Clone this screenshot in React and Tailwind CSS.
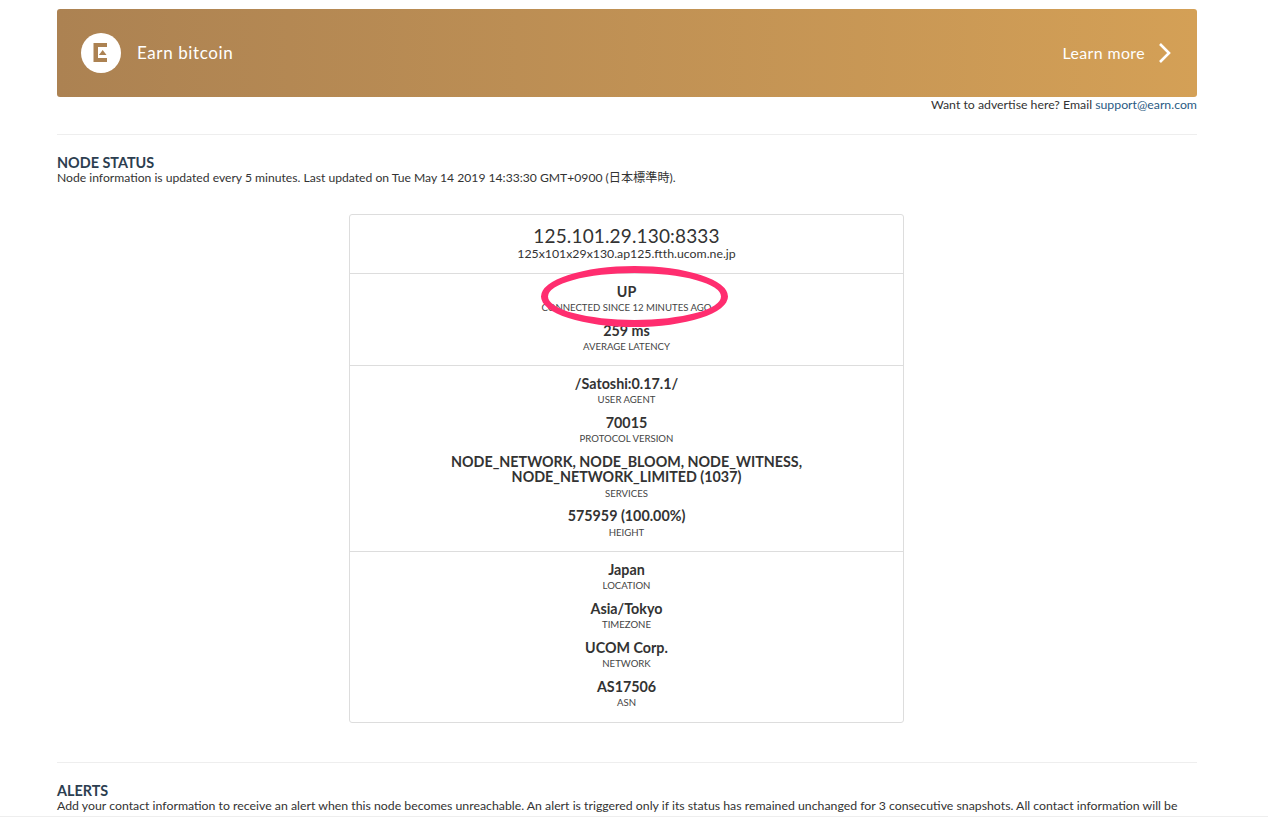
const sans = { fontFamily: '"Lato", "Noto Sans CJK JP", sans-serif' };

function Item({ value, label }) {
  return (
    <div className="mb-[5.5px]">
      <div className="text-[14.3px] leading-[15.5px] font-bold text-[#333]">{value}</div>
      <div className="text-[9.6px] leading-[18px] text-[#444] uppercase">{label}</div>
    </div>
  );
}

function Logo() {
  return (
    <svg width="40" height="40" viewBox="0 0 40 40">
      <circle cx="20" cy="20" r="20" fill="#fff" />
      <path d="M12.5 10H26v4h-9v11h9v4H12.5z" fill="#ac8252" />
      <path d="M21.7 17l3.8 5h-7.6z" fill="#ac8252" />
    </svg>
  );
}

export default function App() {
  return (
    <div className="h-[817px] overflow-hidden bg-white border-b border-[#eee]" style={sans}>
      <div className="w-[1140px] ml-[57px] pt-[9px]">
        <div className="h-[88px] rounded-[3px] bg-gradient-to-r from-[#ac8252] to-[#d4a056] flex items-center justify-between pl-6 pr-6 text-white">
          <div className="flex items-center gap-4">
            <Logo />
            <span className="text-[17px] tracking-[0.6px]">Earn bitcoin</span>
          </div>
          <div className="flex items-center gap-[12px]">
            <span className="text-[15.9px] tracking-[0.4px]">Learn more</span>
            <svg width="16" height="22" viewBox="0 0 16 22" fill="none" stroke="#fff" strokeWidth="2.6">
              <path d="M3 2l9 9-9 9" />
            </svg>
          </div>
        </div>
        <p className="text-right text-[12.3px] leading-[16px] text-[#333]">
          Want to advertise here? Email <a className="text-[#2a5a83]">support@earn.com</a>
        </p>
        <hr className="mt-[21px] border-[#eee]" />
        <h2 className="mt-[20px] text-[14.4px] leading-[15px] font-bold text-[#2c3e50]">NODE STATUS</h2>
        <p className="text-[12.15px] leading-[16px] text-[#333]">
          Node information is updated every 5 minutes. Last updated on Tue May 14 2019 14:33:30 GMT+0900 (日本標準時).
        </p>

        <div className="relative mt-[28px] ml-[292px] w-[555px] border border-[#ddd] rounded-[3px] text-center">
          <div className="h-[59px] pt-[9px] border-b border-[#ddd]">
            <div className="text-[19px] leading-[23px] text-[#333] tracking-[0.15px]">125.101.29.130:8333</div>
            <div className="text-[12.3px] leading-[14px] text-[#333]">125x101x29x130.ap125.ftth.ucom.ne.jp</div>
          </div>
          <div className="pt-[9.5px] pb-[3px] border-b border-[#ddd]">
            <Item value="UP" label="Connected since 12 minutes ago" />
            <Item value="259 ms" label="Average latency" />
          </div>
          <div className="pt-[10px] pb-[3.5px] border-b border-[#ddd]">
            <Item value="/Satoshi:0.17.1/" label="User agent" />
            <Item value="70015" label="Protocol version" />
            <Item value={<>NODE_NETWORK, NODE_BLOOM, NODE_WITNESS,<br />NODE_NETWORK_LIMITED (1037)</>} label="Services" />
            <Item value="575959 (100.00%)" label="Height" />
          </div>
          <div className="pt-[10px] pb-[4px]">
            <Item value="Japan" label="Location" />
            <Item value="Asia/Tokyo" label="Timezone" />
            <Item value="UCOM Corp." label="Network" />
            <Item value="AS17506" label="ASN" />
          </div>
          <div className="absolute left-[191px] top-[51px] w-[187px] h-[61px] rounded-[50%] border-[7px] border-[#ff2d6f]" />
        </div>

        <hr className="mt-[39px] border-[#eee]" />
        <h2 className="mt-[20px] text-[14.4px] leading-[15px] font-bold text-[#2c3e50]">ALERTS</h2>
        <p className="text-[12.3px] leading-[16px] text-[#333]">
          Add your contact information to receive an alert when this node becomes unreachable. An alert is triggered only if its status has remained unchanged for 3 consecutive snapshots. All contact information will be
        </p>
      </div>
    </div>
  );
}
